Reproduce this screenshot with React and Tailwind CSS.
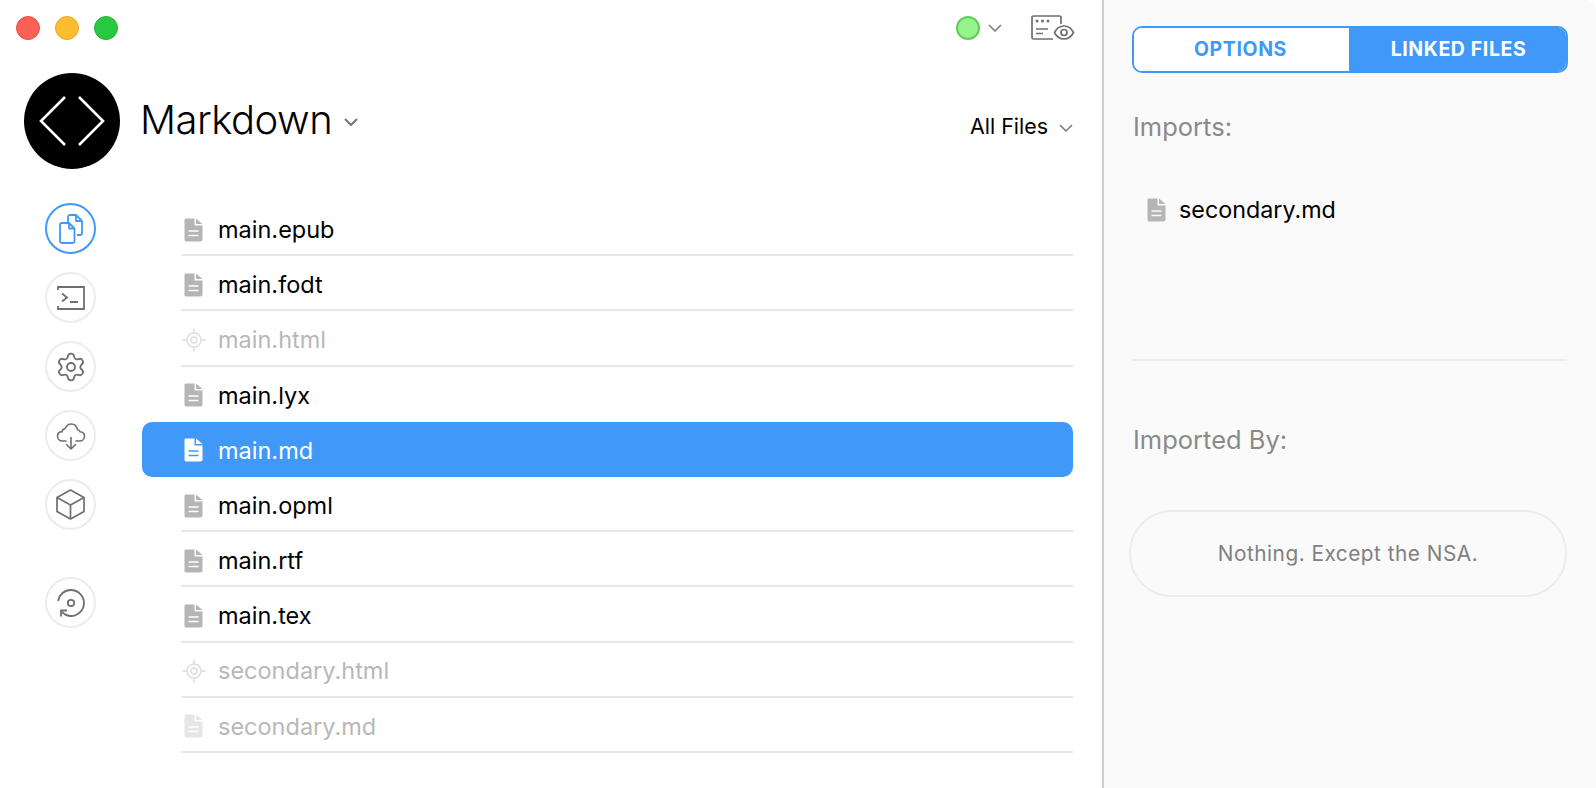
import React from 'react';
import { Settings } from 'lucide-react';

const files = [
    { name: 'main.epub', icon: 'file' },
    { name: 'main.fodt', icon: 'file' },
    { name: 'main.html', icon: 'target', dim: true },
    { name: 'main.lyx', icon: 'file', noLine: true },
    { name: 'main.md', icon: 'file', selected: true, noLine: true },
    { name: 'main.opml', icon: 'file' },
    { name: 'main.rtf', icon: 'file' },
    { name: 'main.tex', icon: 'file' },
    { name: 'secondary.html', icon: 'target', dim: true },
    { name: 'secondary.md', icon: 'file', dim: true },
];

const FileIcon = ({ fill, line, className = '' }) => (
    <svg width="19" height="24" viewBox="0 0 19 24" className={`shrink-0 ${className}`}>
        <path d="M2 0.5H10.5V7.5H18.5V21.5C18.5 22.6 17.6 23.5 16.5 23.5H2C0.9 23.5 0.5 22.6 0.5 21.5V2C0.5 1.1 1.1 0.5 2 0.5Z" fill={fill} />
        <path d="M12 0.5L18.5 6H12Z" fill={fill} />
        <path d="M4.5 13H14.5M4.5 17.5H14.5" stroke={line} strokeWidth="1.6" />
    </svg>
);

const TargetIcon = () => (
    <svg width="24" height="24" viewBox="0 0 24 24" fill="none" stroke="#dcdcdc" strokeWidth="1.4" className="shrink-0 -ml-[3px]">
        <circle cx="12" cy="12" r="7" />
        <circle cx="12" cy="12" r="3" />
        <path d="M12 0.5V5M12 19V23.5M0.5 12H5M19 12H23.5" />
    </svg>
);

const Chevron = ({ className, width = 1.5 }) => (
    <svg width="14" height="8" viewBox="0 0 14 8" fill="none" stroke="#777" strokeWidth={width} className={className}>
        <path d="M1 1L7 7L13 1" />
    </svg>
);

const RoundButton = ({ active, children, className = '' }) => (
    <div className={`w-[51px] h-[51px] rounded-full border-2 flex items-center justify-center ${active ? 'border-[#4099f8] text-[#4099f8]' : 'border-[#ececec] text-[#6f6f6f]'} ${className}`}>
        {children}
    </div>
);

const FileRow = ({ file }) => {
    const textColor = file.selected ? 'text-white' : file.dim ? 'text-[#b8b8b8]' : 'text-black';
    const fill = file.selected ? '#ffffff' : file.dim ? '#e6e6e6' : '#b5b5b5';
    const line = file.selected ? '#4099f8' : '#ffffff';
    return (
        <div className={`h-[55.2px] flex items-center pl-[43px] pt-[2px] ${file.selected ? 'bg-[#4099f8] rounded-[10px]' : ''}`}>
            <div className="w-[33px] flex items-center">
                {file.icon === 'target' ? <TargetIcon /> : <FileIcon fill={fill} line={line} className="-ml-[1px]" />}
            </div>
            <span className={`text-[23.5px] ${textColor}`}>{file.name}</span>
        </div>
    );
};

const App = () => {
    return (
        <div className="w-[1596px] h-[788px] flex bg-white overflow-hidden font-['Inter',sans-serif]">
            <div className="w-[1102px] shrink-0 flex flex-col">
                <div className="h-[55px] flex items-center justify-between pl-[16px] pr-[27px]">
                    <div className="flex gap-[15px]">
                        <div className="w-[24px] h-[24px] rounded-full bg-[#fe5f57] border border-[#e5534c]"></div>
                        <div className="w-[24px] h-[24px] rounded-full bg-[#febc2e] border border-[#e5a82a]"></div>
                        <div className="w-[24px] h-[24px] rounded-full bg-[#28c840] border border-[#24b43a]"></div>
                    </div>
                    <div className="flex items-center">
                        <div className="w-[24px] h-[24px] rounded-full bg-[#95f58c] border-2 border-[#62c95e]"></div>
                        <Chevron className="ml-[8px]" />
                        <svg width="44" height="26" viewBox="0 0 44 26" fill="none" stroke="#6f6f6f" strokeWidth="1.7" className="ml-[29px]">
                            <path d="M30 9V2.5C30 1.4 29.6 1 28.5 1H2.5C1.4 1 1 1.4 1 2.5V22.5C1 23.6 1.4 24 2.5 24H22" />
                            <circle cx="6" cy="6" r="1.5" fill="#6f6f6f" stroke="none" />
                            <circle cx="11.5" cy="6" r="1.5" fill="#6f6f6f" stroke="none" />
                            <circle cx="17" cy="6" r="1.5" fill="#6f6f6f" stroke="none" />
                            <path d="M5 14H17M5 18.5H12" />
                            <path d="M23.5 17.5C25.5 13.5 29 11 33 11C37 11 40.5 13.5 42.5 17.5C40.5 21.5 37 24 33 24C29 24 25.5 21.5 23.5 17.5Z" />
                            <circle cx="33" cy="17.5" r="3" />
                        </svg>
                    </div>
                </div>

                <div className="mt-[18px] h-[96px] flex items-center pl-[24px] pr-[29px]">
                    <div className="w-[96px] h-[96px] rounded-full bg-black flex items-center justify-center">
                        <svg width="66" height="50" viewBox="0 0 66 50" fill="none" stroke="white" strokeWidth="2.6">
                            <path d="M26 1L2 25L26 49M40 1L64 25L40 49" />
                        </svg>
                    </div>
                    <span className="ml-[20px] -mt-[2px] text-[40px] font-light tracking-[-0.5px] text-black">Markdown</span>
                    <Chevron className="ml-[12px] mt-[2px]" width={2} />
                    <span className="ml-auto mt-[10px] text-[21.4px] text-black">All Files</span>
                    <Chevron className="ml-[11px] mt-[13px]" />
                </div>

                <div className="flex pt-[32px]">
                    <div className="w-[141px] shrink-0 pl-[45px] pt-[2px] flex flex-col gap-[18px]">
                        <RoundButton active>
                            <svg width="24" height="30" viewBox="0 0 24 30" fill="none" stroke="currentColor" strokeWidth="1.8" strokeLinejoin="round">
                                <path d="M9 8V3C9 1.8 9.8 1 11 1H17L23 7V19C23 20.2 22.2 21 21 21H18" />
                                <path d="M17 1V7H23" />
                                <path d="M1 11C1 9.8 1.8 9 3 9H10L15.5 14.5V27C15.5 28.2 14.7 29 13.5 29H3C1.8 29 1 28.2 1 27Z" />
                                <path d="M10 9V14.5H15.5" />
                            </svg>
                        </RoundButton>
                        <RoundButton>
                            <svg width="28" height="24" viewBox="0 0 28 24" fill="none" stroke="currentColor" strokeWidth="1.8">
                                <path d="M1 4V1H27V23H1V20" />
                                <path d="M5 7.5L10 11.5L5 15.5M13 16H21" />
                            </svg>
                        </RoundButton>
                        <RoundButton>
                            <Settings size={32} strokeWidth={1.4} />
                        </RoundButton>
                        <RoundButton>
                            <svg width="30" height="30" viewBox="0 0 30 30" fill="none" stroke="currentColor" strokeWidth="1.6" strokeLinejoin="round" strokeLinecap="round">
                                <path d="M10 20H6.5C3.5 20 1.5 18 1.5 15.2C1.5 12.6 3.4 10.8 6 10.6C6.2 9.2 7.4 8 9 7.8C10.2 5 12.4 3 15.2 3C18.4 3 20.8 5.4 21.4 8.4C22.6 8.8 23.6 9.6 24 10.8C26.6 11 28.5 12.8 28.5 15.2C28.5 18 26.4 20 23.5 20H20" />
                                <path d="M15 16.5V28M10.5 23.5L15 28L19.5 23.5" />
                            </svg>
                        </RoundButton>
                        <RoundButton>
                            <svg width="29" height="31" viewBox="0 0 29 31" fill="none" stroke="currentColor" strokeWidth="1.7" strokeLinejoin="round">
                                <path d="M14.5 1L28 8.5V22.5L14.5 30L1 22.5V8.5Z" />
                                <path d="M1 8.5L14.5 16L28 8.5M14.5 16V30" />
                            </svg>
                        </RoundButton>
                        <RoundButton className="mt-[29px]">
                            <svg width="28" height="28" viewBox="0 0 28 28" fill="none" stroke="currentColor" strokeWidth="1.8">
                                <path d="M1 12C2 6 7 1 14 1C21 1 27 7 27 14C27 21 21 27 14 27C10.5 27 7.5 25.5 5 23" />
                                <circle cx="14" cy="14" r="3.2" />
                                <path d="M10 21.5H4V27.5" />
                            </svg>
                        </RoundButton>
                    </div>
                    <div className="w-[931px] ml-[1px]">
                        {files.map((file) => (
                            <div key={file.name}>
                                <FileRow file={file} />
                                {!file.noLine && <div className="h-[2px] -mt-[2px] ml-[39px] bg-[#e8e8e8]"></div>}
                            </div>
                        ))}
                    </div>
                </div>
            </div>

            <div className="flex-1 border-l-2 border-[#cfcfcf] bg-[#fafafa] rounded-tr-[10px] pl-[28px] pr-[28px] pt-[26px]">
                <div className="w-[436px] h-[47px] flex rounded-[10px] border-2 border-[#4099f8] overflow-hidden text-[19.5px] font-bold tracking-[0.6px]">
                    <div className="w-[215px] bg-white text-[#4099f8] flex items-center justify-center pr-[2px]">OPTIONS</div>
                    <div className="flex-1 bg-[#4099f8] text-white flex items-center justify-center pl-[2px]">LINKED FILES</div>
                </div>
                <div className="mt-[39px] pl-[1px] text-[25.5px] leading-[30px] text-[#8a8a8a]">Imports:</div>
                <div className="mt-[53px] pl-[15px] flex items-center h-[30px]">
                    <div className="w-[32px] flex items-center">
                        <FileIcon fill="#b5b5b5" line="#fafafa" />
                    </div>
                    <span className="text-[23.3px] text-black">secondary.md</span>
                </div>
                <div className="mt-[134px] ml-[1px] mr-[1px] h-[2px] bg-[#ececec]"></div>
                <div className="mt-[64px] pl-[1px] text-[25.5px] leading-[30px] text-[#8a8a8a]">Imported By:</div>
                <div className="mt-[55px] -ml-[3px] mr-[1px] h-[87px] rounded-[43px] border-2 border-[#ececec] flex items-center justify-center text-[20.8px] tracking-[0.5px] text-[#808080]">
                    Nothing. Except the NSA.
                </div>
            </div>
        </div>
    );
};

export default App;
